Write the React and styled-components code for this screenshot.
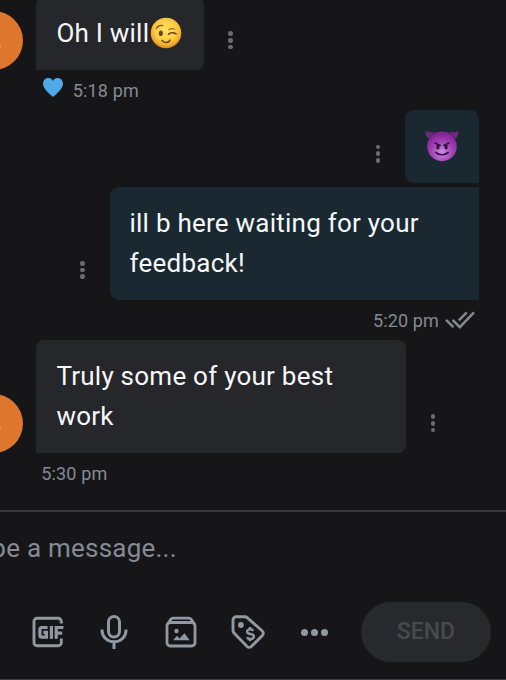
import React from "react";
import styled, { createGlobalStyle } from "styled-components";

const GlobalStyle = createGlobalStyle`
  * {
    box-sizing: border-box;
  }
  body {
    margin: 0;
    background: #161618;
    font-family: Roboto, "Liberation Sans", sans-serif;
  }
`;

function WinkEmoji() {
  return (
    <EmojiSvg $wink width="32" height="32" viewBox="0 0 32 32">
      <defs>
        <radialGradient id="wink" cx="0.5" cy="0.42" r="0.56">
          <stop offset="0" stopColor="#ffe268" />
          <stop offset="0.62" stopColor="#fccc43" />
          <stop offset="0.88" stopColor="#f0ab2d" />
          <stop offset="1" stopColor="#d98a22" />
        </radialGradient>
      </defs>
      <circle cx="16" cy="16" r="15.3" fill="url(#wink)" />
      <ellipse cx="10.8" cy="16.2" rx="2" ry="2.8" fill="#6b4213" />
      <path d="M6.4 11.4C7.7 9.1 10 8.1 12.8 8.6" fill="none" stroke="#8a5717" strokeWidth="1.3" strokeLinecap="round" />
      <path d="M18.6 17.2c1.6-1.8 5-2 7.4-.3" fill="none" stroke="#6b4213" strokeWidth="1.7" strokeLinecap="round" />
      <path d="M18.7 12.6c2-1.1 4.2-1.2 6-.3" fill="none" stroke="#a8701f" strokeWidth="1.1" strokeLinecap="round" />
      <path d="M12 23.6c2.2 2.6 6.1 2.5 8-.4" fill="none" stroke="#6b4213" strokeWidth="1.6" strokeLinecap="round" />
    </EmojiSvg>
  );
}

function DevilEmoji() {
  return (
    <EmojiSvg width="34" height="34" viewBox="0 0 34 34">
      <defs>
        <radialGradient id="devil" cx="0.5" cy="0.7" r="0.62">
          <stop offset="0" stopColor="#cf8ee2" />
          <stop offset="0.5" stopColor="#a64abd" />
          <stop offset="1" stopColor="#852496" />
        </radialGradient>
      </defs>
      <path d="M.6 2.8c2.6 1.7 5.7 1.6 9.3 1.4L3.5 11C1.2 8.8.2 5.8.6 2.8z" fill="#6b2b78" />
      <path d="M33.4 2.8c-2.6 1.7-5.7 1.6-9.3 1.4l6.4 6.8c2.3-2.2 3.3-5.2 2.9-8.2z" fill="#6b2b78" />
      <circle cx="17" cy="18.4" r="14.8" fill="url(#devil)" />
      <path d="M10 15l5.3 2.5M24 15l-5.3 2.5" stroke="#351044" strokeWidth="1.5" strokeLinecap="round" />
      <ellipse cx="12.9" cy="19" rx="1.6" ry="2.5" fill="#30103d" />
      <ellipse cx="21.1" cy="19" rx="1.6" ry="2.5" fill="#30103d" />
      <path d="M10.8 24.4c2.8 3.2 9.6 3.2 12.4 0" fill="none" stroke="#351044" strokeWidth="1.6" strokeLinecap="round" />
    </EmojiSvg>
  );
}

function HeartIcon() {
  return (
    <HeartSvg width="20" height="19" viewBox="0 0 20 19">
      <path d="M10 19C7.6 16.6 0 11.3 0 5.8 0 2.3 2.4 0 5.3 0 7.4 0 9.2 1.2 10 3c.8-1.8 2.6-3 4.7-3C17.6 0 20 2.3 20 5.8 20 11.3 12.4 16.6 10 19z" fill="#4faaea" />
    </HeartSvg>
  );
}

function ReadIcon() {
  return (
    <ReadSvg width="30" height="18" viewBox="0 0 30 18" fill="none" stroke="#85898f" strokeWidth="2.5">
      <path d="M1 8.9l7.4 7.2M7.6 8.9l7.2 7.2L29 1.4M13.8 9.3l8-7.9" />
    </ReadSvg>
  );
}

function GifIcon() {
  return (
    <svg width="32" height="32" viewBox="0 0 32 32" fill="none" stroke="#9298a2" strokeWidth="2.9">
      <path d="M29.3 7.5V5.3a3 3 0 0 0-3-3H5a3 3 0 0 0-3 3v21.4a3 3 0 0 0 3 3h21.3a3 3 0 0 0 3-3V22.5" />
      <path d="M15.6 11.5H9.9a2 2 0 0 0-2 2v5.7a2 2 0 0 0 2 2h4.5v-4.8h-3M19.4 10v12.7M24.2 22.7V11.5h7.2M24.2 17.2h6" strokeWidth="3.2" />
    </svg>
  );
}

function MicIcon() {
  return (
    <svg width="28" height="36" viewBox="0 0 28 36" fill="none" stroke="#9298a2" strokeWidth="3">
      <rect x="8.5" y="2.5" width="11" height="20.5" rx="5.5" />
      <path d="M2 15.5v1a12 11.3 0 0 0 24 0v-1M14 28v7" />
    </svg>
  );
}

function VaultIcon() {
  return (
    <VaultSvg width="32" height="32" viewBox="0 0 32 32" fill="none" stroke="#9298a2" strokeWidth="2.8">
      <rect x="2" y="6.5" width="28" height="23.5" rx="3.2" />
      <path d="M2.6 8l3.2-4.6a3 3 0 0 1 2.4-1.2h15.6a3 3 0 0 1 2.4 1.2L29.4 8" />
      <circle cx="11.5" cy="15" r="2.2" fill="#9298a2" stroke="none" />
      <path d="M8 24.3l4-4.5 2.5 2.7 5-5.2 5.2 7z" fill="#9298a2" stroke="none" />
    </VaultSvg>
  );
}

function PriceIcon() {
  return (
    <svg width="34" height="34" viewBox="0 0 34 34" fill="none" stroke="#9298a2" strokeWidth="2.9" strokeLinejoin="round">
      <path d="M2 5a3.2 3.2 0 0 1 3.2-3.2h8.6c.9 0 1.7.3 2.4.9L31.3 16a3.2 3.2 0 0 1 .1 4.6L20.3 31.5a3 3 0 0 1-4.2 0L3 18a3.5 3.5 0 0 1-1-2.4z" />
      <circle cx="9.9" cy="10" r="2.9" fill="#9298a2" stroke="none" />
      <path d="M22.3 15.7c-1-1.3-3-1.8-4.7-1.1-2 .8-2 3.1-.1 3.9 1.5.6 3.2.4 4.5 1.3 1.5 1.1 1 3.2-1 3.9-1.8.6-4 0-5-1.5M19 12v2.4M19 23.7v2.5" strokeWidth="2.5" />
    </svg>
  );
}

function MenuDots() {
  return (
    <DotsColumn>
      <Dot />
      <Dot />
      <Dot />
    </DotsColumn>
  );
}

function App() {
  return (
    <>
      <GlobalStyle />
      <Screen>
        <Thread>
          <Row>
            <Avatar>S</Avatar>
            <Bubble $radius="8px 8px 8px 0">
              Oh I will
              <WinkEmoji />
            </Bubble>
            <MenuDots />
          </Row>
          <Meta $indent={43}>
            <HeartIcon />
            5:18 pm
          </Meta>

          <Row $sent>
            <MenuDots />
            <Bubble $sent $radius="9px 9px 0 9px">
              <DevilEmoji />
            </Bubble>
          </Row>
          <Row $sent $gap>
            <MenuDots />
            <Bubble $sent $wide $radius="9px 0 0 9px">
              ill b here waiting for your feedback!
            </Bubble>
          </Row>
          <Meta $sent>
            5:20 pm
            <ReadIcon />
          </Meta>

          <Row>
            <Avatar>S</Avatar>
            <Bubble $wide $radius="8px 8px 8px 0">
              Truly some of your best work
            </Bubble>
            <MenuDots />
          </Row>
          <Meta $indent={41.3}>5:30 pm</Meta>
        </Thread>

        <Composer>
          <Placeholder>Type a message...</Placeholder>
          <Toolbar>
            <Tools>
              <GifIcon />
              <MicIcon />
              <VaultIcon />
              <PriceIcon />
              <MoreDots>
                <Dot $large />
                <Dot $large />
                <Dot $large />
              </MoreDots>
            </Tools>
            <SendButton>SEND</SendButton>
          </Toolbar>
        </Composer>
      </Screen>
    </>
  );
}

const Screen = styled.div`
  width: 506px;
  height: 680px;
  display: flex;
  flex-direction: column;
  overflow: hidden;
  background: #161618;
  border-bottom: 1px solid #35404a;
`;

const Thread = styled.div`
  height: 510px;
  flex-shrink: 0;
  display: flex;
  flex-direction: column;
  justify-content: flex-end;
  padding-bottom: 16.6px;
`;

const Row = styled.div`
  display: flex;
  flex-shrink: 0;
  align-items: flex-end;
  justify-content: ${(props) => (props.$sent ? "flex-end" : "flex-start")};
  padding-right: ${(props) => (props.$sent ? "27px" : "0")};
  margin-top: ${(props) => (props.$gap ? "3.5px" : "0")};
`;

const Avatar = styled.div`
  flex: 0 0 59px;
  height: 59px;
  margin: 0 13.4px 0 -36px;
  border-radius: 50%;
  background: #de762d;
  color: #f4eee9;
  font-size: 26px;
  line-height: 62px;
  text-align: center;
`;

const Bubble = styled.div`
  display: flow-root;
  width: ${(props) => (props.$wide ? "369.5px" : "auto")};
  padding: 16.1px 20px 16.9px;
  border-radius: ${(props) => props.$radius};
  background: ${(props) => (props.$sent ? "#1a2931" : "#26272b")};
  color: #f6f7f8;
  font-size: 26px;
  line-height: 40px;
  letter-spacing: 0.24px;
`;

const EmojiSvg = styled.svg`
  display: inline-block;
  height: 34px;
  margin: ${(props) => (props.$wink ? "0 1.5px 0 1px" : "0")};
  vertical-align: ${(props) => (props.$wink ? "-8px" : "-6.5px")};
`;

const DotsColumn = styled.div`
  width: 5px;
  height: 18px;
  margin: 0 24.5px 20.8px;
  display: flex;
  flex-direction: column;
  align-items: center;
  justify-content: space-between;
`;

const Dot = styled.span`
  width: ${(props) => (props.$large ? "7px" : "4.6px")};
  height: ${(props) => (props.$large ? "7px" : "4.6px")};
  border-radius: 50%;
  background: ${(props) => (props.$large ? "#9298a2" : "#6b6c70")};
`;

const Meta = styled.div`
  height: 40.3px;
  flex-shrink: 0;
  display: flex;
  align-items: center;
  justify-content: ${(props) => (props.$sent ? "flex-end" : "flex-start")};
  padding: 1px ${(props) => (props.$sent ? "31.5px" : "0")} 0 ${(props) => props.$indent || 0}px;
  color: #858993;
  font-size: 18px;
  letter-spacing: 0.15px;
`;

const HeartSvg = styled.svg`
  margin: -6px 9.8px 0 0;
`;

const ReadSvg = styled.svg`
  margin-left: 5.5px;
`;

const VaultSvg = styled.svg`
  margin: 0 -1px 0 1px;
`;

const Composer = styled.div`
  flex: 1;
  border-top: 2px solid #36373a;
`;

const Placeholder = styled.div`
  margin: 16px 0 34px -36px;
  color: #858a94;
  font-size: 26px;
  line-height: 40px;
  letter-spacing: 0.23px;
`;

const Toolbar = styled.div`
  height: 60px;
  display: flex;
  align-items: center;
  justify-content: space-between;
  padding: 0 15px 0 32px;
`;

const Tools = styled.div`
  width: 296px;
  display: flex;
  align-items: center;
  justify-content: space-between;
`;

const MoreDots = styled.div`
  width: 27px;
  display: flex;
  justify-content: space-between;
`;

const SendButton = styled.button`
  width: 130px;
  height: 60px;
  padding: 0 0 2px;
  border: none;
  border-radius: 30px;
  background: #28292d;
  color: #48494c;
  font-family: inherit;
  font-size: 23px;
  font-weight: 500;
`;

export default App;
